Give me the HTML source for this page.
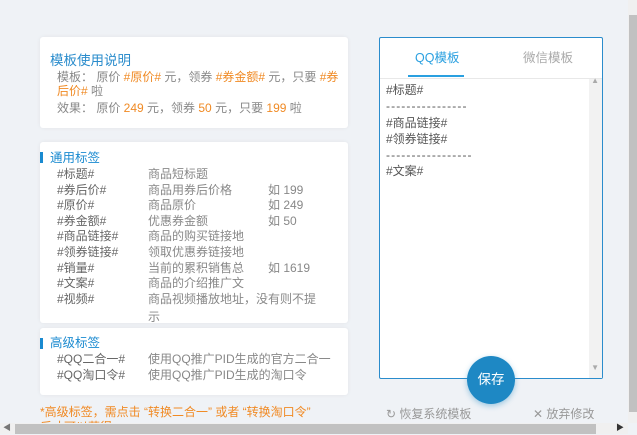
<!DOCTYPE html>
<html><head><meta charset="utf-8"><style>
*{margin:0;padding:0;box-sizing:border-box}
body{width:637px;height:434px;overflow:hidden;background:#eff2f6;font-family:"Liberation Sans","Noto Sans CJK SC",sans-serif;font-size:12px;color:#666;position:relative}
.card{position:absolute;left:40px;width:308px;background:#fff;border-radius:3px;box-shadow:0 0 4px rgba(0,0,0,.06)}
.o{color:#f08a24}
.t{position:absolute;white-space:nowrap}
.bar{position:absolute;left:0;width:3px;height:11px;background:#1a8ad0}
.h{color:#1a8ad0;font-size:12.5px}
.row{position:absolute;left:17px;height:15.6px;line-height:15.6px;white-space:nowrap}
.row span{position:absolute}
</style></head><body>
<div class="card" style="top:37px;height:91px">
 <div class="t" style="left:10px;top:12px;color:#2a8ccc;font-size:13.5px">模板使用说明</div>
 <div class="t" style="left:17px;top:33px;line-height:14px;white-space:normal;width:286px;color:#888">模板： 原价 <span class="o">#原价#</span> 元，领券 <span class="o">#券金额#</span> 元，只要 <span class="o">#券后价#</span> 啦</div>
 <div class="t" style="left:17px;top:62px;color:#888">效果： 原价 <span class="o">249</span> 元，领券 <span class="o">50</span> 元，只要 <span class="o">199</span> 啦</div>
</div>
<div class="card" style="top:142px;height:181px;overflow:hidden">
 <div class="bar" style="top:10px"></div>
 <div class="t h" style="left:10px;top:5px">通用标签</div>
 <div style="position:absolute;top:25px;left:0;width:308px;color:#666">
 <div class="row" style="top:0"><span>#标题#</span><span style="left:91px;color:#888">商品短标题</span></div>
 <div class="row" style="top:15.6px"><span>#券后价#</span><span style="left:91px;color:#888">商品用券后价格</span><span style="left:211px;color:#888">如 199</span></div>
 <div class="row" style="top:31.2px"><span>#原价#</span><span style="left:91px;color:#888">商品原价</span><span style="left:211px;color:#888">如 249</span></div>
 <div class="row" style="top:46.8px"><span>#券金额#</span><span style="left:91px;color:#888">优惠券金额</span><span style="left:211px;color:#888">如 50</span></div>
 <div class="row" style="top:62.4px"><span>#商品链接#</span><span style="left:91px;color:#888">商品的购买链接地</span></div>
 <div class="row" style="top:78px"><span>#领券链接#</span><span style="left:91px;color:#888">领取优惠券链接地</span></div>
 <div class="row" style="top:93.6px"><span>#销量#</span><span style="left:91px;color:#888">当前的累积销售总</span><span style="left:211px;color:#888">如 1619</span></div>
 <div class="row" style="top:109.2px"><span>#文案#</span><span style="left:91px;color:#888">商品的介绍推广文</span></div>
 <div class="row" style="top:124.8px"><span>#视频#</span><span style="left:91px;color:#888">商品视频播放地址，没有则不提</span></div>
 <div class="row" style="top:143px"><span style="left:91px;color:#888">示</span></div>
 </div>
</div>
<div class="card" style="top:328px;height:67px">
 <div class="bar" style="top:10px"></div>
 <div class="t h" style="left:10px;top:4px">高级标签</div>
 <div class="row" style="top:24px"><span>#QQ二合一#</span><span style="left:91px;color:#888">使用QQ推广PID生成的官方二合一</span></div>
 <div class="row" style="top:40px"><span>#QQ淘口令#</span><span style="left:91px;color:#888">使用QQ推广PID生成的淘口令</span></div>
</div>
<div class="t o" style="left:40px;top:403px">*高级标签，需点击 “转换二合一” 或者 “转换淘口令”</div>
<div class="t o" style="left:40px;top:418px">后才可以获得</div>

<div style="position:absolute;left:379px;top:37px;width:224px;height:342px;background:#fff;border:1px solid #2a8ccc;border-radius:2px">
 <div class="t" style="left:35px;top:9px;color:#2aa0e0;font-size:12.5px">QQ模板</div>
 <div style="position:absolute;left:28px;top:37px;width:56px;height:2px;background:#2aa0e0"></div>
 <div class="t" style="left:143px;top:9px;color:#aaa;font-size:12.5px">微信模板</div>
 <div style="position:absolute;left:0;top:40px;width:222px;height:1px;background:#e8e8e8"></div>
 <div style="position:absolute;left:6px;top:44px;line-height:16.3px;color:#555;white-space:pre">#标题#
<span style="letter-spacing:1.1px">----------------</span>
#商品链接#
#领券链接#
<span style="letter-spacing:1.1px">-----------------</span>
#文案#</div>
 <div style="position:absolute;right:0;top:41px;width:13px;height:299px;background:#f2f2f2"></div>
 <div class="t" style="right:3px;top:38px;color:#aaa;font-size:8px">▲</div>
 <div class="t" style="right:3px;top:325px;color:#aaa;font-size:8px">▼</div>
</div>
<div style="position:absolute;left:467px;top:356px;width:48px;height:48px;border-radius:50%;background:#1e88c4;box-shadow:0 2px 6px rgba(30,136,196,.4);color:#fff;font-size:13.5px;text-align:center;line-height:48px">保存</div>
<div class="t" style="left:386px;top:405px;color:#999">↻ 恢复系统模板</div>
<div class="t" style="left:533px;top:405px;color:#999">✕ 放弃修改</div>

<div style="position:absolute;left:628px;top:0;width:9px;height:423px;background:#f0f0f0"></div>
<div style="position:absolute;left:629px;top:15px;width:8px;height:397px;background:#c1c1c1"></div>
<div style="position:absolute;left:0;top:423px;width:628px;height:11px;background:#f0f0f0"></div>
<div style="position:absolute;left:15px;top:424px;width:581px;height:10px;background:#c1c1c1"></div>
<div class="t" style="left:3px;top:422px;font-size:8px;color:#777">◀</div>
<div class="t" style="left:616px;top:422px;font-size:8px;color:#333">▶</div>
</body></html>
